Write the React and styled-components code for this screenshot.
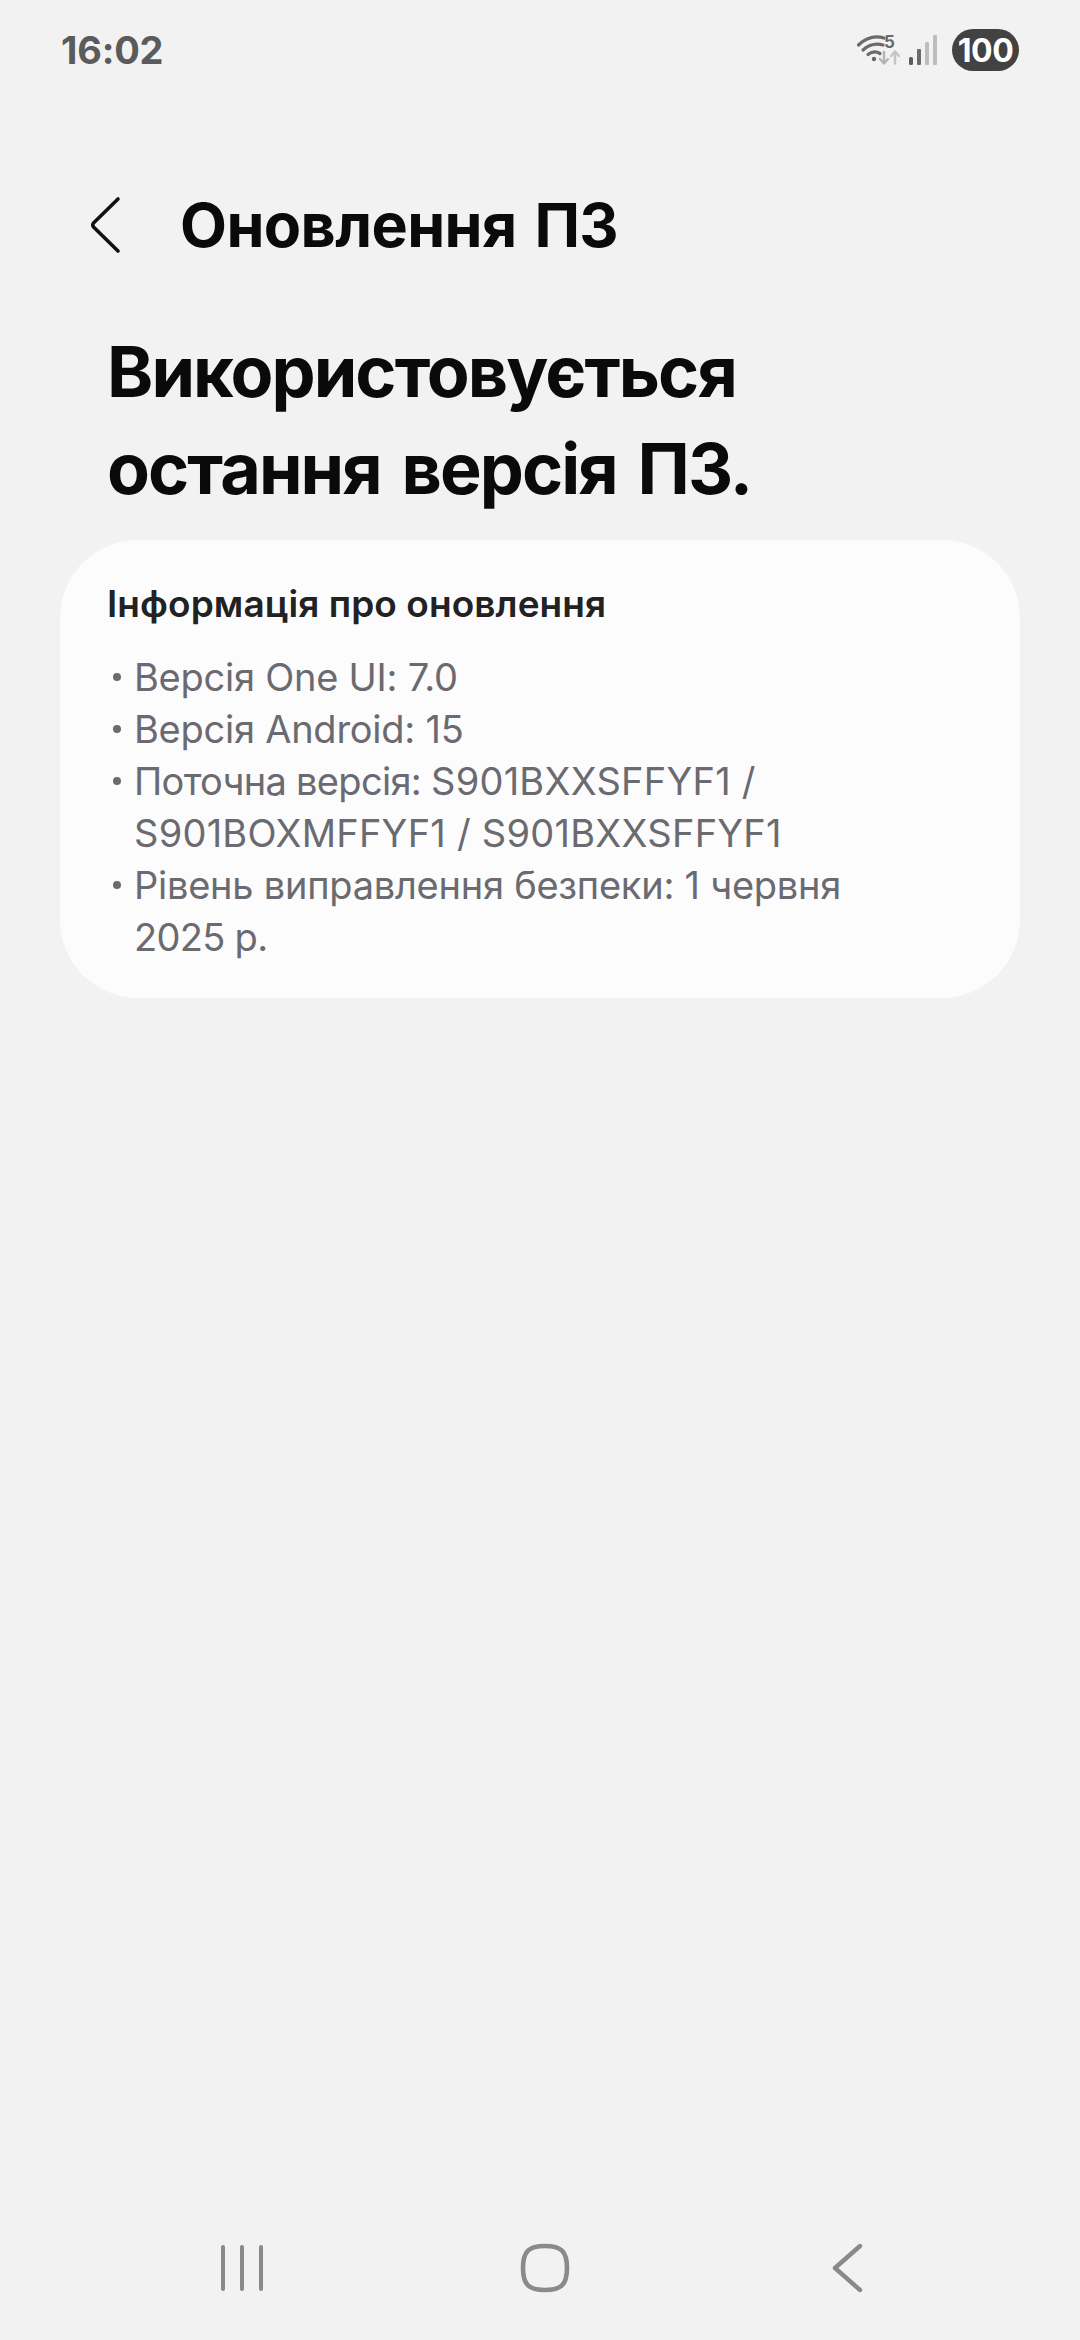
import React from "react";
import styled, { createGlobalStyle } from "styled-components";

const Global = createGlobalStyle`
  html, body {
    margin: 0;
    padding: 0;
    background: #f2f2f3;
  }
  * { box-sizing: border-box; }
`;

export default function App() {
  return (
    <Page>
      <Global />
      <StatusBar>
        <Time>16:02</Time>
        <StatusIcons>
          <Wifi>
            <WifiIcon />
            <WifiBand>5</WifiBand>
          </Wifi>
          <SignalIcon />
          <Battery>100</Battery>
        </StatusIcons>
      </StatusBar>

      <Header>
        <BackButton>
          <svg width="36" height="58" viewBox="0 0 36 58" fill="none">
            <path d="M31 3 L6.5 27 Q5 29 6.5 31 L31 55" stroke="#111" strokeWidth="3.6" strokeLinecap="round" strokeLinejoin="round" />
          </svg>
        </BackButton>
        <Title>Оновлення ПЗ</Title>
      </Header>

      <Headline>
        Використовується
        <br />
        остання версія ПЗ.
      </Headline>

      <Card>
        <CardTitle>Інформація про оновлення</CardTitle>
        <List>
          <Item>Версія One UI: 7.0</Item>
          <Item>Версія Android: 15</Item>
          <Item>
            <Tight>Поточна версія: </Tight>
            <Code>S901BXXSFFYF1 /</Code>
            <br />
            <Code>S901BOXMFFYF1 / S901BXXSFFYF1</Code>
          </Item>
          <Item>
            Рівень виправлення безпеки: 1 червня
            <br />
            <Tight>2025 р.</Tight>
          </Item>
        </List>
      </Card>

      <NavBar>
        <NavIcon>
          <svg width="46" height="46" viewBox="0 0 46 46" fill="none" stroke="#8a8a8a" strokeWidth="4" strokeLinecap="round">
            <path d="M4 2 V44 M23 2 V44 M42 2 V44" />
          </svg>
        </NavIcon>
        <NavIcon>
          <svg width="50" height="50" viewBox="0 0 50 50" fill="none">
            <path d="M25 3 C41 3 47 8 47 25 C47 42 41 47 25 47 C9 47 3 42 3 25 C3 8 9 3 25 3 Z" stroke="#8a8a8a" strokeWidth="4.6" />
          </svg>
        </NavIcon>
        <NavIcon>
          <svg width="39" height="50" viewBox="0 0 39 50" fill="none">
            <path d="M35 3 L10 25 L35 47" stroke="#8a8a8a" strokeWidth="4.4" strokeLinecap="round" strokeLinejoin="round" />
          </svg>
        </NavIcon>
      </NavBar>
    </Page>
  );
}

function WifiIcon() {
  return (
    <svg width="46" height="30" viewBox="0 0 46 30" fill="none">
      <path d="M1.5 10 Q13 -1 27 3" stroke="#6a6a6a" strokeWidth="3.2" strokeLinecap="round" />
      <path d="M6 15 Q15 7 26 10" stroke="#6a6a6a" strokeWidth="3.2" strokeLinecap="round" />
      <path d="M11 19.5 Q17 15 23 18.5" stroke="#6a6a6a" strokeWidth="3.2" strokeLinecap="round" />
      <circle cx="17" cy="24" r="2.2" fill="#6a6a6a" />
      <path d="M27 17 V28 M23 24 L27 28.5 L31 24" stroke="#b5b5b5" strokeWidth="2.4" strokeLinecap="round" strokeLinejoin="round" />
      <path d="M38 28.5 V17 M34 21 L38 16.5 L42 21" stroke="#c4c4c4" strokeWidth="2.4" strokeLinecap="round" strokeLinejoin="round" />
    </svg>
  );
}

function SignalIcon() {
  return (
    <svg width="28" height="30" viewBox="0 0 28 30" fill="none">
      <rect x="0" y="22" width="4" height="8" rx="1.5" fill="#5c5c5c" />
      <rect x="8" y="14" width="4" height="16" rx="1" fill="#6a6a6a" />
      <rect x="16" y="7" width="4" height="23" rx="1" fill="#bdbdbd" />
      <rect x="24" y="0" width="4" height="30" rx="1" fill="#bdbdbd" />
    </svg>
  );
}

const Page = styled.div`
  width: 1080px;
  height: 2340px;
  background: #f2f2f3;
  font-family: Inter, "Noto Sans", sans-serif;
  display: flex;
  flex-direction: column;
  overflow: hidden;
`;

const StatusBar = styled.div`
  height: 100px;
  padding: 0 61px 0 61px;
  display: flex;
  align-items: center;
  justify-content: space-between;
`;

const Time = styled.div`
  font-size: 38px;
  font-weight: 700;
  color: #5b5b5b;
  letter-spacing: -0.2px;
`;

const StatusIcons = styled.div`
  display: flex;
  align-items: center;
  gap: 6px;
`;

const Wifi = styled.div`
  position: relative;
  width: 46px;
  height: 30px;
  display: flex;
`;

const WifiBand = styled.span`
  position: absolute;
  left: 27px;
  top: -3px;
  font-size: 17px;
  line-height: 20px;
  font-weight: 700;
  color: #6a6a6a;
`;

const Battery = styled.div`
  margin-left: 9px;
  width: 67px;
  height: 42px;
  border-radius: 21px;
  background: #424242;
  color: #fff;
  font-size: 32px;
  font-weight: 700;
  letter-spacing: -0.5px;
  display: flex;
  align-items: center;
  justify-content: center;
`;

const Header = styled.div`
  margin-top: 80px;
  height: 90px;
  padding-left: 87px;
  display: flex;
  align-items: center;
  gap: 57px;
`;

const BackButton = styled.div`
  width: 36px;
  display: flex;
`;

const Title = styled.h1`
  margin: 0;
  font-size: 61px;
  font-weight: 700;
  letter-spacing: -0.6px;
  word-spacing: 4px;
  color: #0a0a0a;
`;

const Headline = styled.h2`
  margin: 53px 0 0;
  padding-left: 107px;
  font-size: 70px;
  line-height: 97px;
  font-weight: 700;
  letter-spacing: -1.9px;
  word-spacing: 6px;
  color: #0a0a0a;
`;

const Card = styled.div`
  margin: 23px 60px 0 60px;
  padding: 39px 47px 33px;
  height: 458px;
  border-radius: 78px;
  background: #fcfcfd;
`;

const CardTitle = styled.div`
  font-size: 37px;
  line-height: 50px;
  font-weight: 600;
  letter-spacing: 0.08px;
  color: #222;
`;

const List = styled.ul`
  list-style: none;
  margin: 22px 0 0;
  padding: 0;
`;

const Item = styled.li`
  position: relative;
  padding-left: 27px;
  font-size: 38px;
  line-height: 52px;
  letter-spacing: -0.25px;
  white-space: nowrap;
  color: #6a6a70;
  &::before {
    content: "";
    position: absolute;
    left: 6px;
    top: 22px;
    width: 8px;
    height: 8px;
    border-radius: 50%;
    background: #6a6a70;
  }
`;

const Tight = styled.span`
  letter-spacing: -0.7px;
`;

const Code = styled.span`
  letter-spacing: 0.25px;
`;

const NavBar = styled.div`
  margin-top: auto;
  height: 144px;
  padding-left: 219px;
  display: flex;
  align-items: center;
  gap: 255px;
`;

const NavIcon = styled.div`
  display: flex;
`;
